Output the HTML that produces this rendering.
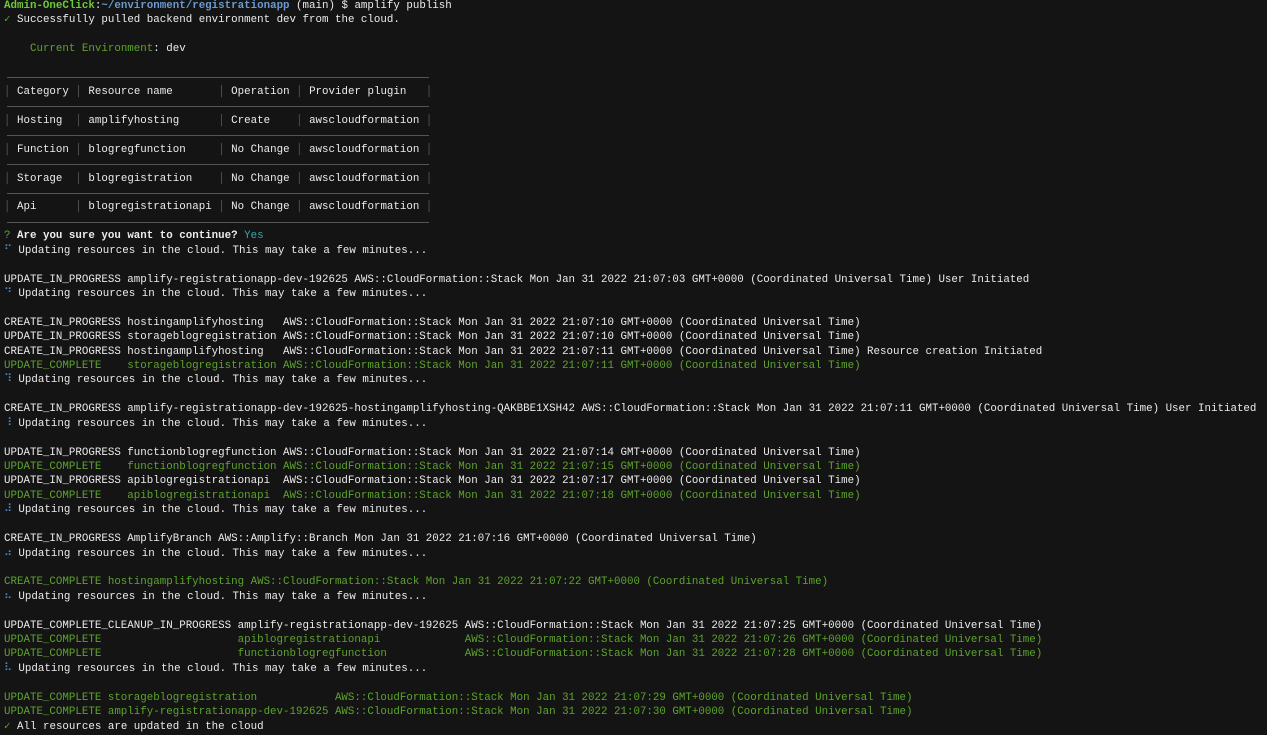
<!DOCTYPE html>
<html><head><meta charset="utf-8"><style>
html,body{margin:0;padding:0;background:#141414;width:1267px;height:735px;overflow:hidden}
pre{margin:0;position:absolute;left:4px;top:-1.5px;font-family:"Liberation Mono",monospace;font-size:10.8px;line-height:14.42px;color:#ececec;letter-spacing:0.01px}
pre span{line-height:14.42px}
.g{color:#5da42c}.pg{color:#6fc83a;font-weight:bold}.b{color:#6a9ad0;font-weight:bold}.c{color:#3aa6a6}.d{color:#5a5a5a}.s{color:#4a8fc8}.w{font-weight:bold}
.h{position:absolute;left:7px;width:422px;height:0;border-top:1px solid #555}
</style></head><body>
<pre><span class="pg">Admin-OneClick</span>:<span class="b">~/environment/registrationapp</span> (main) $ amplify publish
<span class="g">✓</span> Successfully pulled backend environment dev from the cloud.

    <span class="g">Current Environment</span>: dev


<span class="d">│</span> Category <span class="d">│</span> Resource name       <span class="d">│</span> Operation <span class="d">│</span> Provider plugin   <span class="d">│</span>

<span class="d">│</span> Hosting  <span class="d">│</span> amplifyhosting      <span class="d">│</span> Create    <span class="d">│</span> awscloudformation <span class="d">│</span>

<span class="d">│</span> Function <span class="d">│</span> blogregfunction     <span class="d">│</span> No Change <span class="d">│</span> awscloudformation <span class="d">│</span>

<span class="d">│</span> Storage  <span class="d">│</span> blogregistration    <span class="d">│</span> No Change <span class="d">│</span> awscloudformation <span class="d">│</span>

<span class="d">│</span> Api      <span class="d">│</span> blogregistrationapi <span class="d">│</span> No Change <span class="d">│</span> awscloudformation <span class="d">│</span>

<span class="g">?</span> <span class="w">Are you sure you want to continue?</span> <span class="c">Yes</span>
<span class="s">⠋</span> Updating resources in the cloud. This may take a few minutes...

UPDATE_IN_PROGRESS amplify-registrationapp-dev-192625 AWS::CloudFormation::Stack Mon Jan 31 2022 21:07:03 GMT+0000 (Coordinated Universal Time) User Initiated
<span class="s">⠙</span> Updating resources in the cloud. This may take a few minutes...

CREATE_IN_PROGRESS hostingamplifyhosting   AWS::CloudFormation::Stack Mon Jan 31 2022 21:07:10 GMT+0000 (Coordinated Universal Time)
UPDATE_IN_PROGRESS storageblogregistration AWS::CloudFormation::Stack Mon Jan 31 2022 21:07:10 GMT+0000 (Coordinated Universal Time)
CREATE_IN_PROGRESS hostingamplifyhosting   AWS::CloudFormation::Stack Mon Jan 31 2022 21:07:11 GMT+0000 (Coordinated Universal Time) Resource creation Initiated
<span class="g">UPDATE_COMPLETE    storageblogregistration AWS::CloudFormation::Stack Mon Jan 31 2022 21:07:11 GMT+0000 (Coordinated Universal Time)</span>
<span class="s">⠹</span> Updating resources in the cloud. This may take a few minutes...

CREATE_IN_PROGRESS amplify-registrationapp-dev-192625-hostingamplifyhosting-QAKBBE1XSH42 AWS::CloudFormation::Stack Mon Jan 31 2022 21:07:11 GMT+0000 (Coordinated Universal Time) User Initiated
<span class="s">⠸</span> Updating resources in the cloud. This may take a few minutes...

UPDATE_IN_PROGRESS functionblogregfunction AWS::CloudFormation::Stack Mon Jan 31 2022 21:07:14 GMT+0000 (Coordinated Universal Time)
<span class="g">UPDATE_COMPLETE    functionblogregfunction AWS::CloudFormation::Stack Mon Jan 31 2022 21:07:15 GMT+0000 (Coordinated Universal Time)</span>
UPDATE_IN_PROGRESS apiblogregistrationapi  AWS::CloudFormation::Stack Mon Jan 31 2022 21:07:17 GMT+0000 (Coordinated Universal Time)
<span class="g">UPDATE_COMPLETE    apiblogregistrationapi  AWS::CloudFormation::Stack Mon Jan 31 2022 21:07:18 GMT+0000 (Coordinated Universal Time)</span>
<span class="s">⠼</span> Updating resources in the cloud. This may take a few minutes...

CREATE_IN_PROGRESS AmplifyBranch AWS::Amplify::Branch Mon Jan 31 2022 21:07:16 GMT+0000 (Coordinated Universal Time)
<span class="s">⠴</span> Updating resources in the cloud. This may take a few minutes...

<span class="g">CREATE_COMPLETE hostingamplifyhosting AWS::CloudFormation::Stack Mon Jan 31 2022 21:07:22 GMT+0000 (Coordinated Universal Time)</span>
<span class="s">⠦</span> Updating resources in the cloud. This may take a few minutes...

UPDATE_COMPLETE_CLEANUP_IN_PROGRESS amplify-registrationapp-dev-192625 AWS::CloudFormation::Stack Mon Jan 31 2022 21:07:25 GMT+0000 (Coordinated Universal Time)
<span class="g">UPDATE_COMPLETE                     apiblogregistrationapi             AWS::CloudFormation::Stack Mon Jan 31 2022 21:07:26 GMT+0000 (Coordinated Universal Time)</span>
<span class="g">UPDATE_COMPLETE                     functionblogregfunction            AWS::CloudFormation::Stack Mon Jan 31 2022 21:07:28 GMT+0000 (Coordinated Universal Time)</span>
<span class="s">⠧</span> Updating resources in the cloud. This may take a few minutes...

<span class="g">UPDATE_COMPLETE storageblogregistration            AWS::CloudFormation::Stack Mon Jan 31 2022 21:07:29 GMT+0000 (Coordinated Universal Time)</span>
<span class="g">UPDATE_COMPLETE amplify-registrationapp-dev-192625 AWS::CloudFormation::Stack Mon Jan 31 2022 21:07:30 GMT+0000 (Coordinated Universal Time)</span>
<span class="g">✓</span> All resources are updated in the cloud
</pre>
<div class="h" style="top:77px"></div>
<div class="h" style="top:106px"></div>
<div class="h" style="top:135px"></div>
<div class="h" style="top:164px"></div>
<div class="h" style="top:193px"></div>
<div class="h" style="top:222px"></div>
</body></html>
